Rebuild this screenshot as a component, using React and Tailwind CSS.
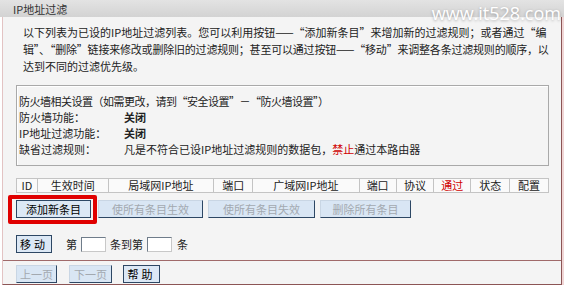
import React from 'react';

const enabledBtn =
  'h-[18px] border border-[#2d4764] bg-[#dce8f5] px-0 text-[11px] leading-none text-black';
const disabledBtn =
  'h-[18px] border border-t-[#c9d6e4] border-l-[#c9d6e4] border-r-[#2d4764] border-b-[#2d4764] bg-[#d9e6f4] text-[11px] leading-none text-[#a3a9b0]';

const columns = [
  { label: 'ID', w: 'w-[20px]' },
  { label: '生效时间', w: 'w-[71px]' },
  { label: '局域网IP地址', w: 'w-[106px]' },
  { label: '端口', w: 'w-[39px]' },
  { label: '广域网IP地址', w: 'w-[107px]' },
  { label: '端口', w: 'w-[37px]' },
  { label: '协议', w: 'w-[38px]' },
  { label: '通过', w: 'w-[37px]', red: true },
  { label: '状态', w: 'w-[39px]' },
  { label: '配置', w: 'w-[39px]' },
];

function InfoRow({ label, children }) {
  return (
    <div className="flex h-[16px] items-center">
      <span className="w-[105px]">{label}</span>
      <span>{children}</span>
    </div>
  );
}

export default function App() {
  return (
    <div className="relative h-[287px] w-[564px] overflow-hidden bg-white font-['Noto_Sans_CJK_SC',sans-serif] text-[11px] text-[#222]">
      <div className="h-[17px] bg-gradient-to-b from-[#e3e3e3] to-[#d3d3d3] pl-[13px] leading-[18px] text-[#333]">
        IP地址过滤
      </div>
      <span className="absolute right-[3px] top-[4px] font-['Open_Sans',sans-serif] text-[18px] leading-none text-white [text-shadow:0_1px_3px_rgba(0,0,0,0.3)]">
        www.it528.com
      </span>

      <div className="ml-[2px] h-[268px] w-[560px] border-b border-l border-r border-b-[#8c5555] border-l-[#e3c3c3] border-r-[#8c5555] bg-[#f4f4f4] shadow-[2px_0_0_#f0d6d6]">
        <div className="pl-[20px] pt-[7px] leading-[17px] whitespace-nowrap">
          <div>以下列表为已设的IP地址过滤列表。您可以利用按钮——“添加新条目”来增加新的过滤规则；或者通过“编</div>
          <div className="tracking-[-0.2px]">辑”、“删除”链接来修改或删除旧的过滤规则；甚至可以通过按钮——“移动”来调整各条过滤规则的顺序，以</div>
          <div>达到不同的过滤优先级。</div>
        </div>

        <div className="ml-[13px] mt-[10px] w-[533px] border border-[#a9a9a9] px-[2px] pt-[7px] pb-[8px] whitespace-nowrap shadow-[inset_1px_1px_0_#fff]">
          <div className="flex h-[16px] items-center tracking-[-0.5px]">防火墙相关设置（如需更改，请到“安全设置”－“防火墙设置”）</div>
          <InfoRow label="防火墙功能：">
            <b className="font-bold">关闭</b>
          </InfoRow>
          <InfoRow label="IP地址过滤功能：">
            <b className="font-bold">关闭</b>
          </InfoRow>
          <InfoRow label="缺省过滤规则：">
            凡是不符合已设IP地址过滤规则的数据包，<span className="text-[#d00000]">禁止</span>通过本路由器
          </InfoRow>
        </div>

        <div className="ml-[13px] mt-[12px] flex h-[15px] w-[533px] border border-[#c4c4c4] bg-[#fafafa]">
          {columns.map((c, i) => (
            <div
              key={i}
              className={`${c.w} flex items-center justify-center whitespace-nowrap leading-none ${
                i > 0 ? 'border-l border-[#c4c4c4]' : ''
              } ${c.red ? 'text-[#d00000]' : ''}`}
            >
              {c.label}
            </div>
          ))}
        </div>

        <div className="mt-[7px] ml-[13px] flex items-center gap-[5px]">
          <div className="relative">
            <div className="absolute -left-[8px] -top-[5px] h-[29px] w-[89px] rounded-[2px] border-[4px] border-[#e00000]" />
            <button className={`${enabledBtn} w-[75px]`}>添加新条目</button>
          </div>
          <button className={`${disabledBtn} ml-[2px] w-[105px]`} disabled>
            使所有条目生效
          </button>
          <button className={`${disabledBtn} w-[107px]`} disabled>
            使所有条目失效
          </button>
          <button className={`${disabledBtn} w-[91px]`} disabled>
            删除所有条目
          </button>
        </div>

        <div className="mt-[17px] ml-[13px] flex items-center">
          <button className={`${enabledBtn} h-[16px] w-[36px] bg-[#d3e2f1] tracking-[3px]`}>移动</button>
          <span className="ml-[14px]">第</span>
          <span className="ml-[4px] h-[15px] w-[25px] border border-[#6f7c8a] border-b-[#c8c8c8] border-r-[#c8c8c8] bg-white" />
          <span className="ml-[4px]">条到第</span>
          <span className="ml-[4px] h-[15px] w-[25px] border border-[#6f7c8a] border-b-[#c8c8c8] border-r-[#c8c8c8] bg-white" />
          <span className="ml-[5px]">条</span>
        </div>

        <div className="mt-[7px] border-t border-[#a06a6a]" />

        <div className="mt-[4px] ml-[13px] flex items-center">
          <button className={`${disabledBtn} h-[15px] w-[41px]`} disabled>
            上一页
          </button>
          <button className={`${disabledBtn} ml-[12px] h-[15px] w-[43px]`} disabled>
            下一页
          </button>
          <button className={`${enabledBtn} ml-[11px] h-[15px] w-[37px] tracking-[3px]`}>帮助</button>
        </div>
      </div>
    </div>
  );
}
